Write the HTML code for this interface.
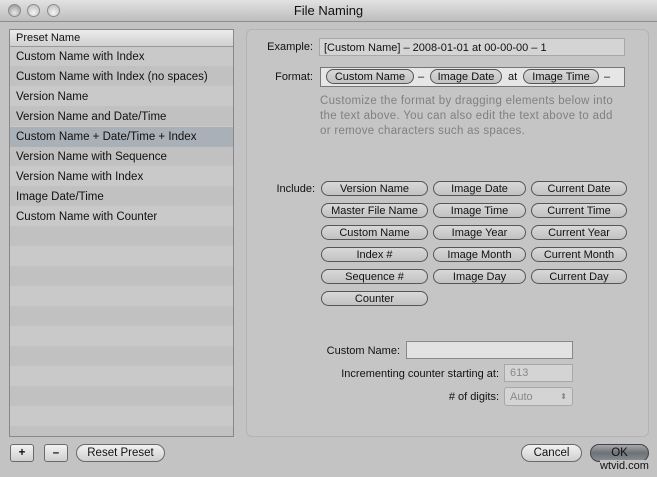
<!DOCTYPE html>
<html><head><style>
*{box-sizing:border-box;margin:0;padding:0}
body{width:657px;height:477px;background:#c3c3c3;font-family:"Liberation Sans",sans-serif;font-size:11px;color:#111;position:relative;overflow:hidden}
.abs{position:absolute}
.title{left:0;top:0;width:657px;height:22px;background:linear-gradient(#e2e2e2,#bdbdbd);border-bottom:1px solid #8f8f8f;text-align:center;font-size:13px;line-height:22px}
.light{width:13px;height:13px;border-radius:50%;top:4px;background:radial-gradient(circle at 50% 70%,#f4f4f4,#b8b8b8);border:1px solid #8a8a8a}
.list{left:9px;top:29px;width:225px;height:408px;border:1px solid #888;background:repeating-linear-gradient(#c9c9c9 0 20px,#c1c1c1 20px 40px);background-position:0 16px;overflow:hidden}
.hdr{height:17px;background:linear-gradient(#ececec,#d0d0d0);border-bottom:1px solid #999;padding-left:6px;line-height:17px}
.row{height:20px;line-height:21px;padding-left:6px;font-size:11.5px}
.sel{background:#a9b0b8}
.panel{left:246px;top:29px;width:403px;height:408px;border:1px solid #b3b3b3;border-radius:6px;background:#c5c5c5}
.lbl{text-align:right;font-size:11px}
.field{background:#d4d4d4;border:1px solid #a8a8a8}
.pill{height:15px;border:1px solid #555;border-radius:8px;background:linear-gradient(#d8d8d8,#c2c2c2);text-align:center;line-height:14px;font-size:11px}
.btn{height:18px;border:1px solid #6a6a6a;border-radius:9px;background:linear-gradient(#f2f2f2,#cfcfcf);text-align:center;line-height:17px;font-size:11.5px}
.help{color:#808080;font-size:11.5px;letter-spacing:0.3px;line-height:15px;white-space:nowrap}
</style></head><body>
<div class="abs title">File Naming</div>
<div class="abs light" style="left:8px;background:radial-gradient(circle at 50% 70%,#e8e8e8,#8c8c8c)"></div>
<div class="abs light" style="left:27px"></div>
<div class="abs light" style="left:47px"></div>

<div class="abs list">
<div class="hdr">Preset Name</div>
<div class="row">Custom Name with Index</div>
<div class="row">Custom Name with Index (no spaces)</div>
<div class="row">Version Name</div>
<div class="row">Version Name and Date/Time</div>
<div class="row sel">Custom Name + Date/Time + Index</div>
<div class="row">Version Name with Sequence</div>
<div class="row">Version Name with Index</div>
<div class="row">Image Date/Time</div>
<div class="row">Custom Name with Counter</div>
</div>

<div class="abs panel"></div>
<div class="abs lbl" style="left:250px;top:41px;width:63px">Example:</div>
<div class="abs field" style="left:319px;top:38px;width:306px;height:18px;padding-left:4px;line-height:18px">[Custom Name] – 2008-01-01 at 00-00-00 – 1</div>
<div class="abs lbl" style="left:250px;top:71px;width:63px">Format:</div>
<div class="abs" style="left:320px;top:67px;width:305px;height:20px;background:#e6e6e6;border:1px solid #777"></div>
<div class="abs pill" style="left:326px;top:69px;width:88px">Custom Name</div>
<div class="abs" style="left:418px;top:71px">–</div>
<div class="abs pill" style="left:430px;top:69px;width:72px">Image Date</div>
<div class="abs" style="left:508px;top:71px">at</div>
<div class="abs pill" style="left:523px;top:69px;width:76px">Image Time</div>
<div class="abs" style="left:604px;top:71px">–</div>
<div class="abs help" style="left:320px;top:94px">Customize the format by dragging elements below into<br>the text above. You can also edit the text above to add<br>or remove characters such as spaces.</div>

<div class="abs lbl" style="left:250px;top:183px;width:65px">Include:</div>
<div class="abs pill" style="left:321px;top:181px;width:107px">Version Name</div>
<div class="abs pill" style="left:433px;top:181px;width:93px">Image Date</div>
<div class="abs pill" style="left:531px;top:181px;width:96px">Current Date</div>
<div class="abs pill" style="left:321px;top:203px;width:107px">Master File Name</div>
<div class="abs pill" style="left:433px;top:203px;width:93px">Image Time</div>
<div class="abs pill" style="left:531px;top:203px;width:96px">Current Time</div>
<div class="abs pill" style="left:321px;top:225px;width:107px">Custom Name</div>
<div class="abs pill" style="left:433px;top:225px;width:93px">Image Year</div>
<div class="abs pill" style="left:531px;top:225px;width:96px">Current Year</div>
<div class="abs pill" style="left:321px;top:247px;width:107px">Index #</div>
<div class="abs pill" style="left:433px;top:247px;width:93px">Image Month</div>
<div class="abs pill" style="left:531px;top:247px;width:96px">Current Month</div>
<div class="abs pill" style="left:321px;top:269px;width:107px">Sequence #</div>
<div class="abs pill" style="left:433px;top:269px;width:93px">Image Day</div>
<div class="abs pill" style="left:531px;top:269px;width:96px">Current Day</div>
<div class="abs pill" style="left:321px;top:291px;width:107px">Counter</div>

<div class="abs lbl" style="left:300px;top:345px;width:100px">Custom Name:</div>
<div class="abs" style="left:406px;top:341px;width:167px;height:18px;background:#e2e2e2;border:1px solid #888"></div>
<div class="abs lbl" style="left:300px;top:368px;width:199px">Incrementing counter starting at:</div>
<div class="abs field" style="left:504px;top:364px;width:69px;height:18px;color:#888;padding-left:5px;line-height:17px">613</div>
<div class="abs lbl" style="left:380px;top:391px;width:119px"># of digits:</div>
<div class="abs field" style="left:504px;top:387px;width:69px;height:19px;color:#888;padding-left:5px;line-height:18px;border-radius:3px">Auto<span style="position:absolute;right:5px;top:0;font-size:8px">⬍</span></div>

<div class="abs btn" style="left:10px;top:444px;width:24px;border-radius:3px;font-weight:bold">+</div>
<div class="abs btn" style="left:44px;top:444px;width:24px;border-radius:3px;font-weight:bold">–</div>
<div class="abs btn" style="left:76px;top:444px;width:89px">Reset Preset</div>
<div class="abs btn" style="left:521px;top:444px;width:61px">Cancel</div>
<div class="abs btn" style="left:590px;top:444px;width:59px;background:linear-gradient(#a5a9ad,#6d7276 50%,#8a8f93);border-color:#444">OK</div>
<div class="abs" style="left:600px;top:460px;font-size:11px;color:#111;background:#c3c3c3">wtvid.com</div>
</body></html>
